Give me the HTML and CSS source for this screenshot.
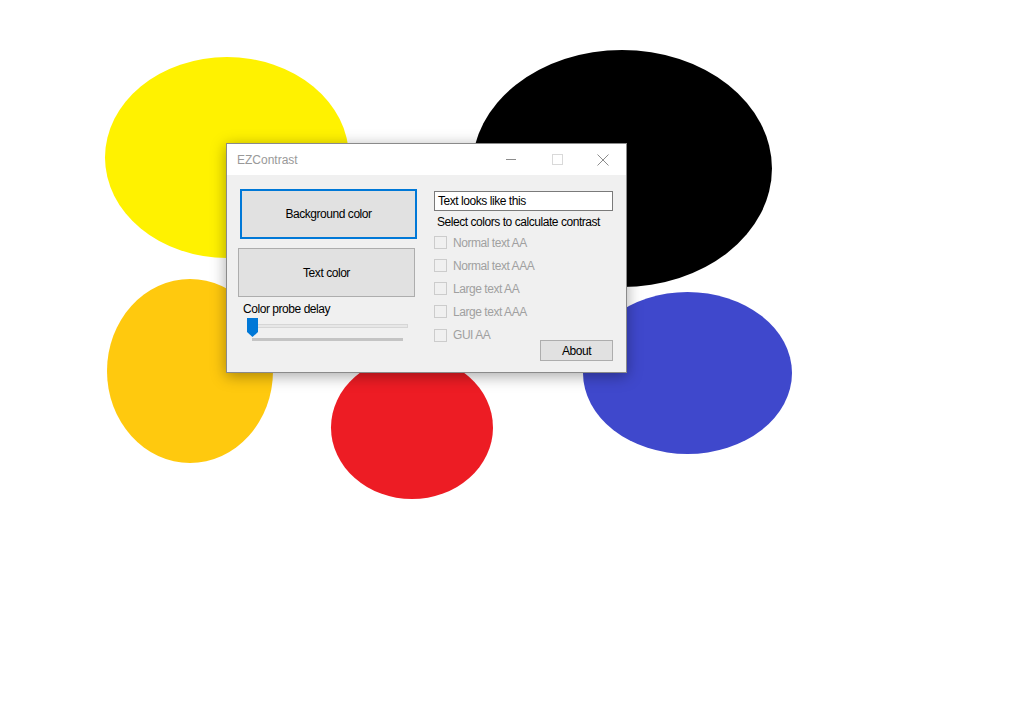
FILE: index.html
```html
<!DOCTYPE html>
<html>
<head>
<meta charset="utf-8">
<title>EZContrast</title>
<link rel="stylesheet" href="styles.css">
</head>
<body>
<div class="canvas">
  <div class="blob yellow"></div>
  <div class="blob black"></div>
  <div class="blob gold"></div>
  <div class="blob red"></div>
  <div class="blob blue"></div>

  <div class="window">
    <div class="titlebar">
      <span class="title">EZContrast</span>
      <div class="caption-buttons">
        <span class="cap-btn">
          <svg width="11" height="11" viewBox="0 0 11 11"><line x1="0" y1="5.5" x2="10" y2="5.5" stroke="#8c8c8c" stroke-width="1"/></svg>
        </span>
        <span class="cap-btn">
          <svg width="11" height="11" viewBox="0 0 11 11"><rect x="0.5" y="0.5" width="10" height="10" fill="none" stroke="#d9d9d9" stroke-width="1"/></svg>
        </span>
        <span class="cap-btn">
          <svg width="12" height="12" viewBox="0 0 12 12"><path d="M0.5 0.5 L11.5 11.5 M11.5 0.5 L0.5 11.5" stroke="#8c8c8c" stroke-width="1"/></svg>
        </span>
      </div>
    </div>
    <div class="client">
      <div class="left-col">
        <button class="btn btn-focused">Background color</button>
        <button class="btn btn-text">Text color</button>
        <div class="label probe">Color probe delay</div>
        <div class="slider">
          <div class="track"></div>
          <svg class="thumb" width="11" height="19" viewBox="0 0 11 19"><polygon points="0,0 11,0 11,14 5.5,19 0,14" fill="#0078d7"/></svg>
          <div class="ticks"></div>
        </div>
      </div>
      <div class="right-col">
        <div class="textbox">Text looks like this</div>
        <div class="label status">Select colors to calculate contrast</div>
        <div class="checks">
          <div class="check"><span class="box"></span><span>Normal text AA</span></div>
          <div class="check"><span class="box"></span><span>Normal text AAA</span></div>
          <div class="check"><span class="box"></span><span>Large text AA</span></div>
          <div class="check"><span class="box"></span><span>Large text AAA</span></div>
          <div class="check last-row">
            <div class="check-inner"><span class="box"></span><span>GUI AA</span></div>
            <button class="btn btn-about">About</button>
          </div>
        </div>
      </div>
    </div>
  </div>
</div>
</body>
</html>
```

FILE: styles.css
```css
html, body {
  margin: 0;
  padding: 0;
  background: #ffffff;
}
body {
  font-family: "Liberation Sans", Arial, sans-serif;
  font-size: 12px;
  letter-spacing: -0.45px;
}
.canvas {
  position: relative;
  width: 1012px;
  height: 715px;
  overflow: hidden;
}
.blob {
  position: absolute;
  border-radius: 50%;
}
.yellow { left: 105px; top: 57px; width: 244px; height: 201px; background: #fff200; }
.black { left: 472px; top: 50px; width: 300px; height: 237px; background: #000000; }
.gold { left: 107px; top: 279px; width: 166px; height: 184px; background: #ffc90e; }
.red { left: 331px; top: 356px; width: 162px; height: 143px; background: #ed1c24; }
.blue { left: 583px; top: 292px; width: 209px; height: 162px; background: #3f48cc; }

.window {
  position: absolute;
  left: 226px;
  top: 143px;
  width: 399px;
  height: 228px;
  border: 1px solid #8a8a8a;
  background: #f0f0f0;
  box-shadow: 0 3px 14px rgba(0,0,0,0.35);
  display: flex;
  flex-direction: column;
}
.titlebar {
  height: 31px;
  background: #ffffff;
  display: flex;
  align-items: center;
  justify-content: space-between;
  padding-left: 10px;
}
.title {
  color: #999999;
  font-size: 12px;
  letter-spacing: 0;
}
.caption-buttons {
  display: flex;
  height: 31px;
}
.cap-btn {
  width: 46px;
  height: 31px;
  display: flex;
  align-items: center;
  justify-content: center;
}
.client {
  flex: 1;
  display: flex;
  background: #f0f0f0;
}
.left-col {
  box-sizing: border-box;
  width: 190px;
  padding-left: 11px;
  padding-top: 14px;
  display: flex;
  flex-direction: column;
}
.btn {
  font-family: "Liberation Sans", Arial, sans-serif;
  font-size: 12px;
  letter-spacing: -0.45px;
  color: #000;
  background: #e1e1e1;
  border: 1px solid #adadad;
  padding: 0;
  margin: 0;
  box-sizing: border-box;
}
.btn-focused {
  width: 177px;
  height: 50px;
  margin-left: 2px;
  border: 2px solid #0078d7;
}
.btn-text {
  width: 177px;
  height: 49px;
  margin-top: 9px;
}
.label {
  color: #000;
  font-size: 12px;
  line-height: 14px;
  white-space: nowrap;
}
.probe {
  margin-top: 5px;
  margin-left: 5px;
}
.slider {
  position: relative;
  height: 26px;
  margin-top: 2px;
}
.track {
  position: absolute;
  left: 15px;
  top: 6px;
  width: 153px;
  height: 2px;
  background: #e7e7e7;
  border: 1px solid #d6d6d6;
}
.thumb {
  position: absolute;
  left: 9px;
  top: 0px;
}
.ticks {
  position: absolute;
  left: 14px;
  top: 20px;
  width: 151px;
  height: 3px;
  background: #c4c4c4;
}
.right-col {
  margin-left: 17px;
  width: 179px;
  padding-top: 16px;
  display: flex;
  flex-direction: column;
}
.textbox {
  box-sizing: border-box;
  height: 20px;
  width: 179px;
  border: 1px solid #7a7a7a;
  background: #ffffff;
  padding-left: 3px;
  line-height: 18px;
  color: #000;
  white-space: nowrap;
}
.status {
  margin-top: 4px;
  margin-left: 3px;
}
.checks {
  margin-top: 2px;
  display: flex;
  flex-direction: column;
}
.check {
  display: flex;
  align-items: center;
  height: 23px;
  color: #a0a0a0;
  white-space: nowrap;
}
.check-inner {
  display: flex;
  align-items: center;
  height: 24px;
}
.box {
  width: 11px;
  height: 11px;
  border: 1px solid #cccccc;
  background: #f0f0f0;
  margin-right: 6px;
}
.last-row {
  justify-content: space-between;
  align-items: flex-start;
  height: 24px;
}
.btn-about {
  width: 73px;
  height: 21px;
  margin-top: 17px;
}
```
